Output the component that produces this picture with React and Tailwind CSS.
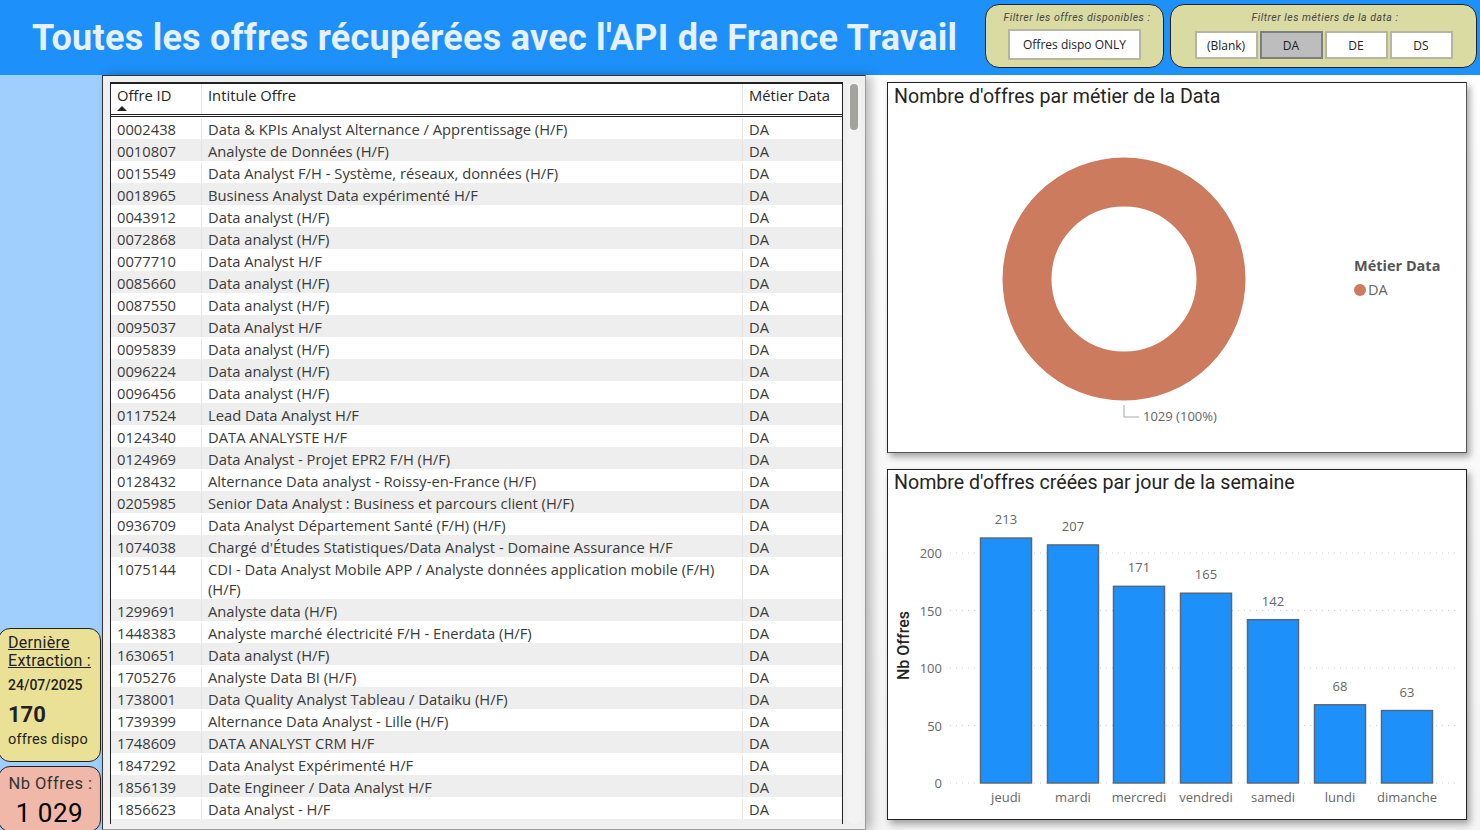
const offres = [
  ['0002438', 'Data & KPIs Analyst Alternance / Apprentissage (H/F)'],
  ['0010807', 'Analyste de Données (H/F)'],
  ['0015549', 'Data Analyst F/H - Système, réseaux, données (H/F)'],
  ['0018965', 'Business Analyst Data expérimenté H/F'],
  ['0043912', 'Data analyst (H/F)'],
  ['0072868', 'Data analyst (H/F)'],
  ['0077710', 'Data Analyst H/F'],
  ['0085660', 'Data analyst (H/F)'],
  ['0087550', 'Data analyst (H/F)'],
  ['0095037', 'Data Analyst H/F'],
  ['0095839', 'Data analyst (H/F)'],
  ['0096224', 'Data analyst (H/F)'],
  ['0096456', 'Data analyst (H/F)'],
  ['0117524', 'Lead Data Analyst H/F'],
  ['0124340', 'DATA ANALYSTE H/F'],
  ['0124969', 'Data Analyst - Projet EPR2 F/H (H/F)'],
  ['0128432', 'Alternance Data analyst - Roissy-en-France (H/F)'],
  ['0205985', 'Senior Data Analyst : Business et parcours client (H/F)'],
  ['0936709', 'Data Analyst Département Santé (F/H) (H/F)'],
  ['1074038', "Chargé d'Études Statistiques/Data Analyst - Domaine Assurance H/F"],
  ['1075144', 'CDI - Data Analyst Mobile APP / Analyste données application mobile (F/H) (H/F)'],
  ['1299691', 'Analyste data (H/F)'],
  ['1448383', 'Analyste marché électricité F/H - Enerdata (H/F)'],
  ['1630651', 'Data analyst (H/F)'],
  ['1705276', 'Analyste Data BI (H/F)'],
  ['1738001', 'Data Quality Analyst Tableau / Dataiku (H/F)'],
  ['1739399', 'Alternance Data Analyst - Lille (H/F)'],
  ['1748609', 'DATA ANALYST CRM H/F'],
  ['1847292', 'Data Analyst Expérimenté H/F'],
  ['1856139', 'Date Engineer / Data Analyst H/F'],
  ['1856623', 'Data Analyst - H/F'],
];

const jours = [
  { nom: 'jeudi', val: 213, x: 92 },
  { nom: 'mardi', val: 207, x: 159 },
  { nom: 'mercredi', val: 171, x: 225 },
  { nom: 'vendredi', val: 165, x: 292 },
  { nom: 'samedi', val: 142, x: 359 },
  { nom: 'lundi', val: 68, x: 426 },
  { nom: 'dimanche', val: 63, x: 493 },
];

const din = "font-['Roboto',sans-serif]";
const segoe = "font-['Open_Sans',sans-serif]";

function Slicer({ label, active, className }) {
  return (
    <div className={`h-[28px] pt-[1px] flex items-center justify-center border-2 text-[12px] text-[#222] ${active ? 'bg-[#bdbdbd] border-[#7f7f7f]' : 'bg-white border-[#b5b5a0]'} ${className}`}>
      {label}
    </div>
  );
}

function Donut() {
  return (
    <svg width="577" height="330" className="absolute left-0 top-[26px]">
      <circle cx="236" cy="170" r="97" fill="none" stroke="#cd7b5f" strokeWidth="49" />
      <path d="M236 296 V308 H251" fill="none" stroke="#a8a8a8" strokeWidth="1" />
    </svg>
  );
}

function BarChart() {
  const y0 = 313;
  return (
    <svg width="577" height="349" className={`absolute left-0 top-0 ${segoe}`}>
      <text transform="translate(21 210) rotate(-90)" fontSize="16" fontWeight="500" fill="#252423" style={{ fontFamily: 'Roboto, sans-serif' }}>Nb Offres</text>
      {[0, 50, 100, 150, 200].map(v => (
        <g key={v}>
          <line x1="62" x2="570" y1={y0 - v * 1.15} y2={y0 - v * 1.15} stroke="#cfcfcf" strokeDasharray="1 5" />
          <text x="54" y={y0 - v * 1.15 + 5} textAnchor="end" fontSize="13" fill="#666">{v}</text>
        </g>
      ))}
      {jours.map(j => (
        <g key={j.nom}>
          <rect x={j.x + 0.5} y={y0 - j.val * 1.15} width="51" height={j.val * 1.15} fill="#1e90fa" stroke="#56697c" strokeWidth="1.5" />
          <text x={j.x + 26} y={y0 - j.val * 1.15 - 14} textAnchor="middle" fontSize="13" fill="#666">{j.val}</text>
          <text x={j.x + 26} y="332" textAnchor="middle" fontSize="13" fill="#666">{j.nom}</text>
        </g>
      ))}
    </svg>
  );
}

export default function App() {
  return (
    <div className={`w-[1480px] h-[830px] overflow-hidden flex flex-col bg-[#f4f4f4] ${segoe}`}>
      {/* header */}
      <header className="h-[75px] shrink-0 bg-[#1e90fa] flex items-start">
        <h1 className={`ml-[32px] mt-[15px] w-[940px] whitespace-nowrap text-[36px] leading-[46px] font-bold tracking-[0.26px] text-[#e6f1fb] ${din}`}>
          Toutes les offres récupérées avec l'API de France Travail
        </h1>
        <div className="ml-[13px] mt-[4px] w-[179px] h-[64px] rounded-[14px] border border-[#222] bg-[#d9dba3] flex flex-col items-center">
          <p className={`mt-[6px] ml-[5px] text-[10.5px] leading-[13px] italic text-[#444] tracking-[0.5px] whitespace-nowrap ${din}`}>Filtrer les offres disponibles :</p>
          <Slicer label="Offres dispo ONLY" className="mt-[5px] w-[133px] h-[31px]" />
        </div>
        <div className="ml-[6px] mt-[4px] w-[307px] h-[64px] rounded-[14px] border border-[#222] bg-[#d9dba3] flex flex-col items-center">
          <p className={`mt-[6px] ml-[3px] text-[10.5px] leading-[13px] italic text-[#444] tracking-[0.5px] whitespace-nowrap ${din}`}>Filtrer les métiers de la data :</p>
          <div className="mt-[7px] flex gap-[2px]">
            <Slicer label="(Blank)" className="w-[63px]" />
            <Slicer label="DA" active className="w-[63px]" />
            <Slicer label="DE" className="w-[63px]" />
            <Slicer label="DS" className="w-[63px]" />
          </div>
        </div>
      </header>

      <div className="flex-1 flex min-h-0">
        {/* left column */}
        <aside className={`w-[102px] shrink-0 bg-[#a0cffd] flex flex-col justify-end ${din}`}>
          <div className="-ml-[2px] w-[103px] h-[134px] rounded-[12px] border border-[#222] bg-[#ebe196] pl-[9px] text-[#222]">
            <p className="mt-[5px] text-[16px] leading-[18px] underline font-normal tracking-[0.3px]">Dernière Extraction :</p>
            <p className="mt-[6px] text-[14px] leading-[18px] font-medium">24/07/2025</p>
            <p className="mt-[8px] text-[22px] leading-[26px] font-bold">170</p>
            <p className="mt-[2px] text-[14.5px] leading-[20px] tracking-[0.2px]">offres dispo</p>
          </div>
          <div className="-ml-[2px] mt-[4px] -mb-[2px] w-[103px] h-[66px] rounded-[12px] border border-[#222] bg-[#f0b8a8] flex flex-col items-center">
            <p className="mt-[7px] ml-[2px] text-[16.5px] leading-[20px] tracking-[0.5px] text-[#333]">Nb Offres :</p>
            <p className="mt-[3px] text-[26px] leading-[32px] font-normal text-black tracking-[0.5px]">1 029</p>
          </div>
        </aside>

        {/* table panel */}
        <section className="w-[764px] shrink-0 border border-[#333] border-b-[#999] border-r-[#999] bg-[#efefef] pl-[7px] pt-[6px] flex shadow-[6px_0_10px_rgba(0,0,0,0.25)] relative">
          <div className="w-[733px] flex flex-col border-x border-[#222] bg-[#efefef] overflow-hidden h-[742px] self-start">
            <div className="h-[32px] shrink-0 flex border-t-2 border-[#222] bg-white text-[14.75px] leading-[20px] text-[#252423] relative">
              <div className="w-[91px] pl-[6px] pt-[1px] border-r border-[#e4e4e4]">Offre ID</div>
              <div className="w-[541px] pl-[6px] pt-[1px] border-r border-[#e4e4e4]">Intitule Offre</div>
              <div className="pl-[6px] pt-[1px]">Métier Data</div>
              <span className="absolute left-[6px] bottom-[3px] w-0 h-0 border-x-[5px] border-x-transparent border-b-[5px] border-b-[#222]" />
            </div>
            <div className="h-[3px] shrink-0 border-y border-[#222] bg-white" />
            {offres.map((o, i) => (
              <div key={o[0]} className={`flex shrink-0 text-[14.75px] leading-[20px] text-[#3a3a3a] pt-[2px] ${i % 2 === 0 ? 'bg-white' : 'bg-[#eeeeee]'}`}>
                <div className="w-[91px] pl-[6px] border-r border-[#e4e4e4]">{o[0]}</div>
                <div className="w-[541px] pl-[6px] pr-[10px] border-r border-[#e4e4e4]">{o[1]}</div>
                <div className="pl-[6px]">DA</div>
              </div>
            ))}
          </div>
          <div className="ml-[4px] w-[14px] h-[742px] bg-[#f3f3f3] rounded-[6px] flex justify-center">
            <div className="mt-[2px] w-[8px] h-[46px] rounded-[4px] bg-[#a3a39d]" />
          </div>
        </section>

        {/* charts */}
        <main className="flex-1 pl-[21px] pr-[13px] pt-[7px] flex flex-col gap-[16px] bg-[linear-gradient(#fff,#f4f4f4)]">
          <div className="relative h-[371px] bg-white border border-[#222] border-b-[#555] border-r-[#555] shadow-[3px_4px_7px_rgba(0,0,0,0.35)]">
            <h2 className={`pl-[6px] pt-[1px] text-[19.6px] leading-[26px] text-[#252423] font-normal ${din}`}>Nombre d'offres par métier de la Data</h2>
            <Donut />
            <p className="absolute left-[255px] top-[324px] text-[13px] leading-[18px] text-[#666]">1029 (100%)</p>
            <p className="absolute left-[466px] top-[173px] text-[14.5px] leading-[20px] font-bold text-[#555]">Métier Data</p>
            <div className="absolute left-[466px] top-[197px] flex items-center gap-[2px] text-[14.5px] leading-[20px] text-[#666]">
              <span className="w-[12px] h-[12px] rounded-full bg-[#cd7b5f]" />
              DA
            </div>
          </div>
          <div className="relative h-[351px] bg-white border border-[#222] shadow-[3px_4px_7px_rgba(0,0,0,0.35)]">
            <h2 className={`pl-[6px] text-[19.6px] leading-[26px] text-[#252423] font-normal ${din}`}>Nombre d'offres créées par jour de la semaine</h2>
            <BarChart />
          </div>
        </main>
      </div>
    </div>
  );
}
